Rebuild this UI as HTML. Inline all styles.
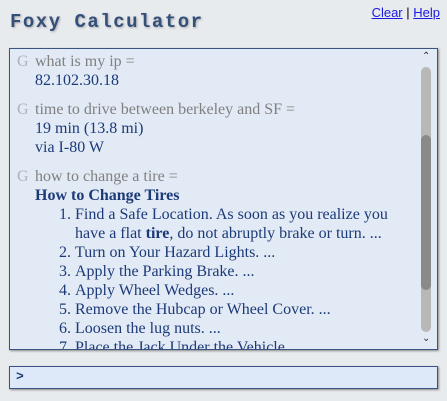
<!DOCTYPE html>
<html><head><style>
body{margin:0;width:447px;height:401px;background:#e8ebee;position:relative;overflow:hidden;font-family:"Liberation Serif",serif;}
h1{position:absolute;left:10px;top:11px;margin:0;font:bold 19px "Liberation Mono",monospace;letter-spacing:1.5px;color:#34507a;text-shadow:1px 1px 2px #aaa;}
.links{position:absolute;right:7px;top:5px;font:13px "Liberation Sans",sans-serif;color:#000}
.links a{color:#1a1ae0;text-decoration:underline}
.out{position:absolute;left:9px;top:48px;width:427px;height:300px;border:1px solid #3b5283;background:#e2eaf5;box-shadow:1px 1px 2px #888;overflow:hidden;font-size:16px;line-height:19px}
.e{position:relative;padding-left:25px;padding-right:30px;margin-top:3px;margin-bottom:10px}
.g{position:absolute;left:7px;top:0;color:#a9b2bd}
.q{color:#808080}
.a{color:#1c3a78}
ol{margin:0;padding-left:40px}
.sb{position:absolute;right:4px;top:0;width:14px;height:300px}
.tr{position:absolute;left:2px;top:18px;width:10px;height:265px;background:#b8b8b8;border-radius:5px}
.th{position:absolute;left:2px;top:86px;width:10px;height:155px;background:#8a8a8a;border-radius:5px}
.inp{position:absolute;left:9px;top:366px;border:1px solid #3b5283;background:#dde9f9;box-shadow:1px 1px 2px #888;font:bold 13px "Liberation Mono",monospace;color:#1c3a78;line-height:20px;padding-left:6px;box-sizing:border-box;width:429px;height:23px}
</style></head><body>
<h1>Foxy Calculator</h1>
<div class="links"><a>Clear</a> | <a>Help</a></div>
<div class="out">
<div class="e"><span class="g">G</span><div class="q">what is my ip =</div><div class="a">82.102.30.18</div></div>
<div class="e"><span class="g">G</span><div class="q">time to drive between berkeley and SF =</div><div class="a">19 min (13.8 mi)<br>via I-80 W</div></div>
<div class="e"><span class="g">G</span><div class="q">how to change a tire =</div><div class="a"><b>How to Change Tires</b>
<ol><li>Find a Safe Location. As soon as you realize you have a flat <b>tire</b>, do not abruptly brake or turn. ...</li><li>Turn on Your Hazard Lights. ...</li><li>Apply the Parking Brake. ...</li><li>Apply Wheel Wedges. ...</li><li>Remove the Hubcap or Wheel Cover. ...</li><li>Loosen the lug nuts. ...</li><li>Place the Jack Under the Vehicle. ...</li></ol></div></div>
<div class="sb"><div style="position:absolute;top:2px;left:3px;font:10px sans-serif;color:#333">&#8963;</div><div class="tr"></div><div class="th"></div><div style="position:absolute;top:284px;left:3px;font:10px sans-serif;color:#333">&#8964;</div></div>
</div>
<div class="inp">&gt;</div>
</body></html>
